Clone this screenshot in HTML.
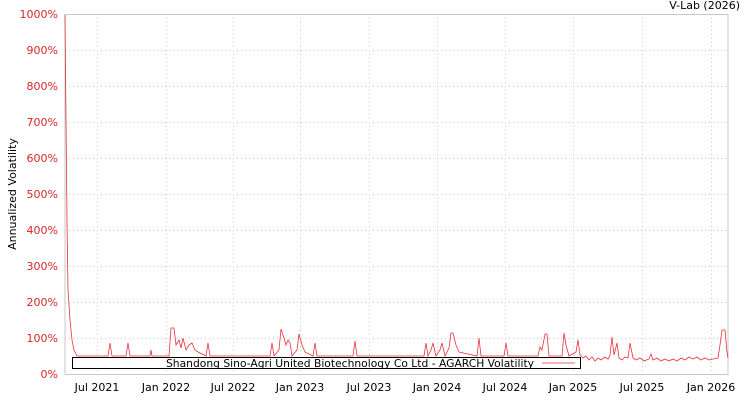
<!DOCTYPE html>
<html><head><meta charset="utf-8"><style>
html,body{margin:0;padding:0;background:#fff;width:750px;height:400px;overflow:hidden}
svg text{font-family:"DejaVu Sans","Liberation Sans",sans-serif;font-size:11px}
</style></head><body>
<svg width="750" height="400" xmlns="http://www.w3.org/2000/svg">
<text x="740" y="9" text-anchor="end" fill="#000">V-Lab (2026)</text>
<g stroke="#c8c8c8" stroke-dasharray="1,3" stroke-width="1">
<line x1="65" x2="728" y1="50.5" y2="50.5"/><line x1="65" x2="728" y1="86.5" y2="86.5"/>
<line x1="65" x2="728" y1="122.5" y2="122.5"/><line x1="65" x2="728" y1="158.5" y2="158.5"/>
<line x1="65" x2="728" y1="194.5" y2="194.5"/><line x1="65" x2="728" y1="230.5" y2="230.5"/>
<line x1="65" x2="728" y1="266.5" y2="266.5"/><line x1="65" x2="728" y1="302.5" y2="302.5"/>
<line x1="65" x2="728" y1="338.5" y2="338.5"/>
<line x1="97.5" x2="97.5" y1="14" y2="374"/><line x1="166.5" x2="166.5" y1="14" y2="374"/>
<line x1="233.5" x2="233.5" y1="14" y2="374"/><line x1="300.5" x2="300.5" y1="14" y2="374"/>
<line x1="369.5" x2="369.5" y1="14" y2="374"/><line x1="437.5" x2="437.5" y1="14" y2="374"/>
<line x1="505.5" x2="505.5" y1="14" y2="374"/><line x1="573.5" x2="573.5" y1="14" y2="374"/>
<line x1="642.5" x2="642.5" y1="14" y2="374"/><line x1="711.5" x2="711.5" y1="14" y2="374"/>
</g>
<rect x="65" y="14.5" width="663" height="360" fill="none" stroke="#c8c8c8"/>
<g fill="#d62728" text-anchor="end">
<text x="58" y="18">1000%</text><text x="58" y="54">900%</text><text x="58" y="90">800%</text>
<text x="58" y="126">700%</text><text x="58" y="162">600%</text><text x="58" y="198">500%</text>
<text x="58" y="234">400%</text><text x="58" y="270">300%</text><text x="58" y="306">200%</text>
<text x="58" y="342">100%</text><text x="58" y="378">0%</text>
</g>
<text transform="translate(16,194) rotate(-90)" text-anchor="middle" fill="#000">Annualized Volatility</text>
<g fill="#000" text-anchor="middle">
<text x="97" y="391">Jul 2021</text><text x="166" y="391">Jan 2022</text><text x="233" y="391">Jul 2022</text>
<text x="300" y="391">Jan 2023</text><text x="369" y="391">Jul 2023</text><text x="437" y="391">Jan 2024</text>
<text x="505" y="391">Jul 2024</text><text x="573" y="391">Jan 2025</text><text x="642" y="391">Jul 2025</text>
<text x="711" y="391">Jan 2026</text>
</g>
<path fill="none" stroke="#e8303a" stroke-width="0.8" d="M65,15 L66,120 L67,220 L68,290 L70,320 L72,340 L74,350 L77,356 L108,356 L110,343 L112,356 L126,356 L128,343 L130,356 L150,356 L151,350 L152,356 L169,356 L171,328 L174,328 L176,345 L179,340 L181,348 L183,338 L186,350 L189,345 L192,343 L195,350 L198,352 L206,356 L208,343 L210,356 L270,356 L272,343 L274,356 L279,350 L281,329 L284,338 L286,345 L288,340 L290,343 L292,356 L297,350 L299,334 L302,345 L305,352 L313,356 L315,343 L317,356 L353,356 L355,341 L357,356 L424,356 L426,343 L428,356 L431,350 L433,343 L436,356 L440,350 L442,343 L445,356 L449,348 L451,333 L453,333 L456,345 L459,352 L477,356 L479,338 L481,356 L504,356 L506,343 L508,356 L538,356 L540,347 L542,350 L545,334 L547,334 L549,356 L562,356 L564,333 L566,345 L569,356 L576,352 L578,340 L580,355 L583,358 L586,356 L589,360 L592,357 L595,361 L598,358 L601,360 L605,357 L608,359 L610,355 L612,337 L614,355 L617,343 L619,358 L622,360 L625,357 L628,358 L630,343 L633,358 L636,360 L640,358 L644,361 L649,359 L651,354 L653,360 L657,358 L661,361 L665,359 L669,361 L673,359 L677,361 L681,358 L685,360 L689,357 L693,359 L697,357 L701,360 L705,358 L709,360 L713,359 L718,358 L720,345 L722,330 L725,330 L727,352 L728,358"/>
<rect x="72.5" y="357.5" width="508" height="11" fill="#fff" stroke="#000"/>
<text x="350" y="367" text-anchor="middle" fill="#000" textLength="368" lengthAdjust="spacingAndGlyphs">Shandong Sino-Agri United Biotechnology Co Ltd - AGARCH Volatility</text>
<line x1="542" x2="575" y1="363" y2="363" stroke="#e8303a" stroke-width="0.8"/>
</svg>
</body></html>
